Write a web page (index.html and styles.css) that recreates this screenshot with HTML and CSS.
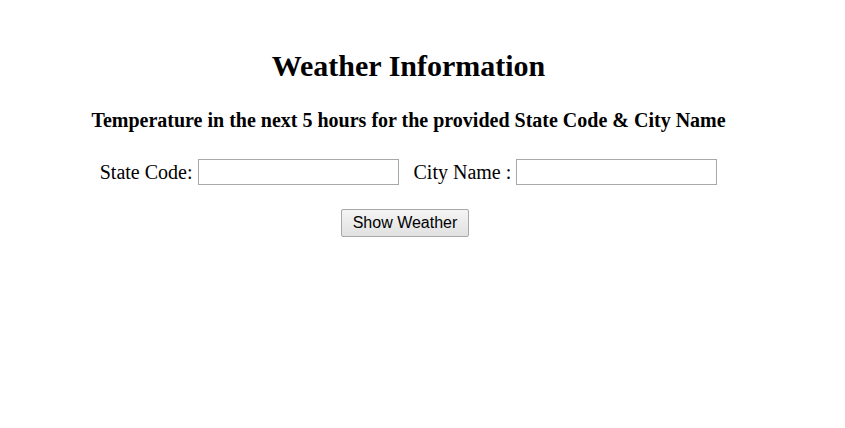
FILE: index.html
```html
<!DOCTYPE html>
<html>
<head>
<meta charset="utf-8">
<link rel="stylesheet" href="styles.css">
</head>
<body>
<div class="container">
  <h1 class="title">Weather Information</h1>
  <h3 class="subtitle">Temperature in the next 5 hours for the provided State Code &amp; City Name</h3>
  <div class="form-row">
    <label class="field">State Code: <input class="text-input" type="text"></label>
    <label class="field">City Name : <input class="text-input" type="text"></label>
  </div>
  <div class="actions">
    <button class="btn" type="button">Show Weather</button>
  </div>
</div>
</body>
</html>
```

FILE: styles.css
```css
html, body {
  background: #fff;
}
body {
  margin: 8px;
  font-family: "Liberation Serif", "Times New Roman", serif;
  color: #000;
}
.container {
  width: 801px;
  text-align: center;
  padding-top: 20px;
}
.title {
  font-size: 30px;
  font-weight: bold;
  margin: 21px 0 26px;
}
.subtitle {
  font-size: 20px;
  font-weight: bold;
  margin: 0 0 27px;
}
.form-row {
  display: flex;
  justify-content: center;
  gap: 15px;
  font-size: 20px;
}
.field {
  display: inline-flex;
  align-items: center;
  gap: 5px;
}
.text-input {
  box-sizing: border-box;
  width: 201px;
  height: 26px;
  border: 1px solid #a9a9a9;
  padding: 1px;
  margin: 0;
}
.actions {
  margin-top: 24px;
  padding-right: 7px;
}
.btn {
  box-sizing: border-box;
  width: 128px;
  height: 28px;
  font-family: "Liberation Sans", Arial, sans-serif;
  font-size: 16px;
  padding: 0;
  background: linear-gradient(#f4f4f4, #e1e1e1);
  border: 1px solid #a8a8a8;
  border-radius: 2px;
  color: #000;
}
```
